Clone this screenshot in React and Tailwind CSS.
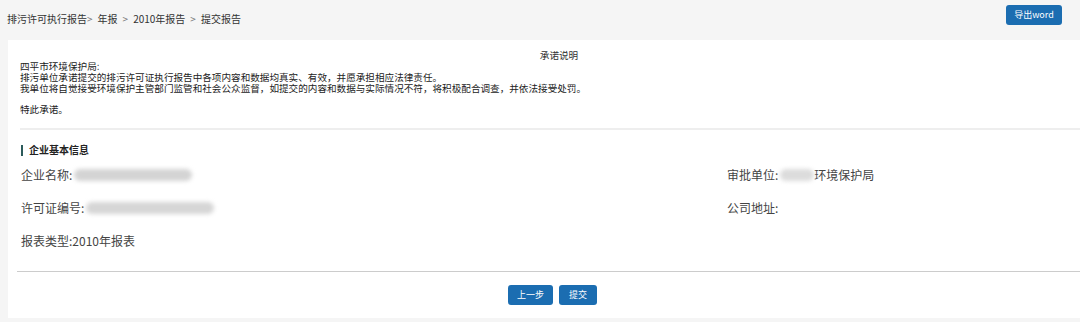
export default function App() {
  const cjk = { fontFamily: '"Noto Sans CJK SC", "Liberation Sans", sans-serif' };
  return (
    <div className="w-[1080px] h-[322px] bg-[#f5f5f5] text-[#333]" style={cjk}>
      {/* header */}
      <div className="h-[40px] flex items-start justify-between pl-[7px] pr-[18px]">
        <div className="pt-[12px] text-[10px] leading-[14px] text-[#333] flex items-center">
          <span>排污许可执行报告</span>
          <span className="text-[#777] mr-[5px]">&gt;</span>
          <span>年报</span>
          <span className="text-[#777] mx-[5px]">&gt;</span>
          <span>2010年报告</span>
          <span className="text-[#777] mx-[5px]">&gt;</span>
          <span>提交报告</span>
        </div>
        <button className="mt-[5px] w-[56px] h-[20px] rounded-[3px] bg-[#1b6db1] text-white text-[9px] leading-[20px]">
          导出word
        </button>
      </div>

      {/* panel */}
      <div className="ml-[8px] h-[278px] bg-white flex flex-col">
        <div className="pl-[12px] pt-[9px]">
          <div className="text-center pl-[18px] text-[9.6px] leading-[12px]">承诺说明</div>
          <div className="text-[9.6px] leading-[11px] text-[#222]">
            <div>四平市环境保护局:</div>
            <div>排污单位承诺提交的排污许可证执行报告中各项内容和数据均真实、有效，并愿承担相应法律责任。</div>
            <div>我单位将自觉接受环境保护主管部门监管和社会公众监督，如提交的内容和数据与实际情况不符，将积极配合调查，并依法接受处罚。</div>
            <div className="mt-[10px]">特此承诺。</div>
          </div>
          <div className="mt-[13px] h-[2px] bg-[#eeeeee]" />
        </div>

        <div className="pl-[13px] pt-[14px]">
          <div className="flex items-center">
            <span className="w-[2px] h-[11px] bg-[#2c5b5b] mr-[6px]" />
            <span className="text-[10px] font-bold leading-[12px] text-[#222]">企业基本信息</span>
          </div>

          <div className="mt-[12px] grid grid-cols-[706px_1fr] text-[12px] leading-[14px] text-[#444] gap-y-[19px]">
            <div className="flex items-center">
              <span>企业名称:</span>
              <span className="ml-[2px] w-[118px] h-[12px] rounded-full bg-[#d4d4d4] blur-[2px]" />
            </div>
            <div className="flex items-center">
              <span>审批单位:</span>
              <span className="ml-[2px] w-[34px] h-[12px] rounded-full bg-[#dcdcdc] blur-[2px]" />
              <span>环境保护局</span>
            </div>
            <div className="flex items-center">
              <span>许可证编号:</span>
              <span className="ml-[2px] w-[128px] h-[12px] rounded-full bg-[#d6d6d6] blur-[2px]" />
            </div>
            <div>公司地址:</div>
            <div>报表类型:2010年报表</div>
            <div />
          </div>
        </div>

        <div className="mt-[23px] ml-[9px] h-px bg-[#cccccc]" />

        <div className="mt-[13px] flex justify-center gap-[6px] pl-[17px]">
          <button className="w-[45px] h-[20px] rounded-[3px] bg-[#1b6db1] text-white text-[9px] leading-[20px]">上一步</button>
          <button className="w-[38px] h-[20px] rounded-[3px] bg-[#1b6db1] text-white text-[9px] leading-[20px]">提交</button>
        </div>
      </div>
    </div>
  );
}
